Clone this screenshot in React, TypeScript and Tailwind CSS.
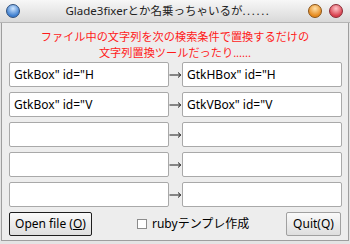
import React from 'react';

const Ball = ({ from, to, edge }: { from: string; to: string; edge: string }) => (
  <span
    className="block w-[14px] h-[14px] rounded-full border"
    style={{ background: `radial-gradient(circle at 50% 30%, ${from} 0%, ${to} 70%)`, borderColor: edge }}
  />
);

const Arrow = () => (
  <svg width="13" height="8" viewBox="0 0 13 8" className="shrink-0">
    <path d="M0.5 4H11.5" stroke="#1a1a1a" strokeWidth="1" />
    <path d="M9 1.5L11.8 4L9 6.5" stroke="#1a1a1a" strokeWidth="1" fill="none" />
  </svg>
);

const Entry = ({ value }: { value: string }) => (
  <div className="w-[160px] h-[25px] shrink-0 rounded-[2px] border border-[#a9a9a9] bg-white pl-[4px] flex items-center text-[12px] text-black whitespace-nowrap overflow-hidden">
    {value}
  </div>
);

const rows = [
  ['GtkBox" id="H', 'GtkHBox" id="H'],
  ['GtkBox" id="V', 'GtkVBox" id="V'],
  ['', ''],
  ['', ''],
  ['', ''],
];

export default function App() {
  return (
    <div className="w-[350px] h-[244px] bg-[#e4e4e4] font-['Noto_Sans','Noto_Sans_CJK_JP',sans-serif] overflow-hidden">
      {/* title bar */}
      <div className="h-[23px] bg-gradient-to-b from-[#f7f7f7] to-[#d9d9d9] border-b border-[#b5b5b5] flex items-center px-[6px]">
        <Ball from="#cfe6ff" to="#3f7fcf" edge="#2e4f7c" />
        <div className="flex-1 text-center text-[11.5px] text-[#222] pl-[8px] whitespace-nowrap">
          Glade3fixerとか名乗っちゃいるが<span className="tracking-[1.6px]">......</span>
        </div>
        <div className="flex gap-[7px] pr-[1px]">
          <Ball from="#ffe0a8" to="#e58a1e" edge="#8a5214" />
          <Ball from="#ffc4c8" to="#d8404e" edge="#8a2a34" />
        </div>
      </div>

      {/* body */}
      <div className="mx-[1px] h-[218px] bg-[#ededed] border-x border-b border-[#9e9e9e] px-[7px]">
        <div className="pt-[6px] text-center text-[11.2px] leading-[16px] text-[#ff1a1a]">
          <div>ファイル中の文字列を次の検索条件で置換するだけの</div>
          <div>文字列置換ツールだったり......</div>
        </div>
        <div className="mt-[1px] flex flex-col gap-[5px]">
          {rows.map((r, i) => (
            <div key={i} className="flex items-center">
              <Entry value={r[0]} />
              <Arrow />
              <Entry value={r[1]} />
            </div>
          ))}
        </div>
        <div className="mt-[5px] flex items-center text-[12px] text-black">
          <button className="w-[83px] h-[24px] rounded-[2px] border border-[#1e1e1e] bg-gradient-to-b from-[#fafafa] to-[#dedede] flex items-center justify-center">
            Open file (<span className="underline">O</span>)
          </button>
          <label className="ml-[45px] flex items-center gap-[5px]">
            <span className="w-[10px] h-[10px] border border-[#8c8c8c] bg-white" />
            <span>rubyテンプレ作成</span>
          </label>
          <button className="ml-auto w-[55px] h-[24px] rounded-[2px] border border-[#a0a0a0] bg-gradient-to-b from-[#fafafa] to-[#dedede] flex items-center justify-center">
            Quit(Q)
          </button>
        </div>
      </div>
    </div>
  );
}
